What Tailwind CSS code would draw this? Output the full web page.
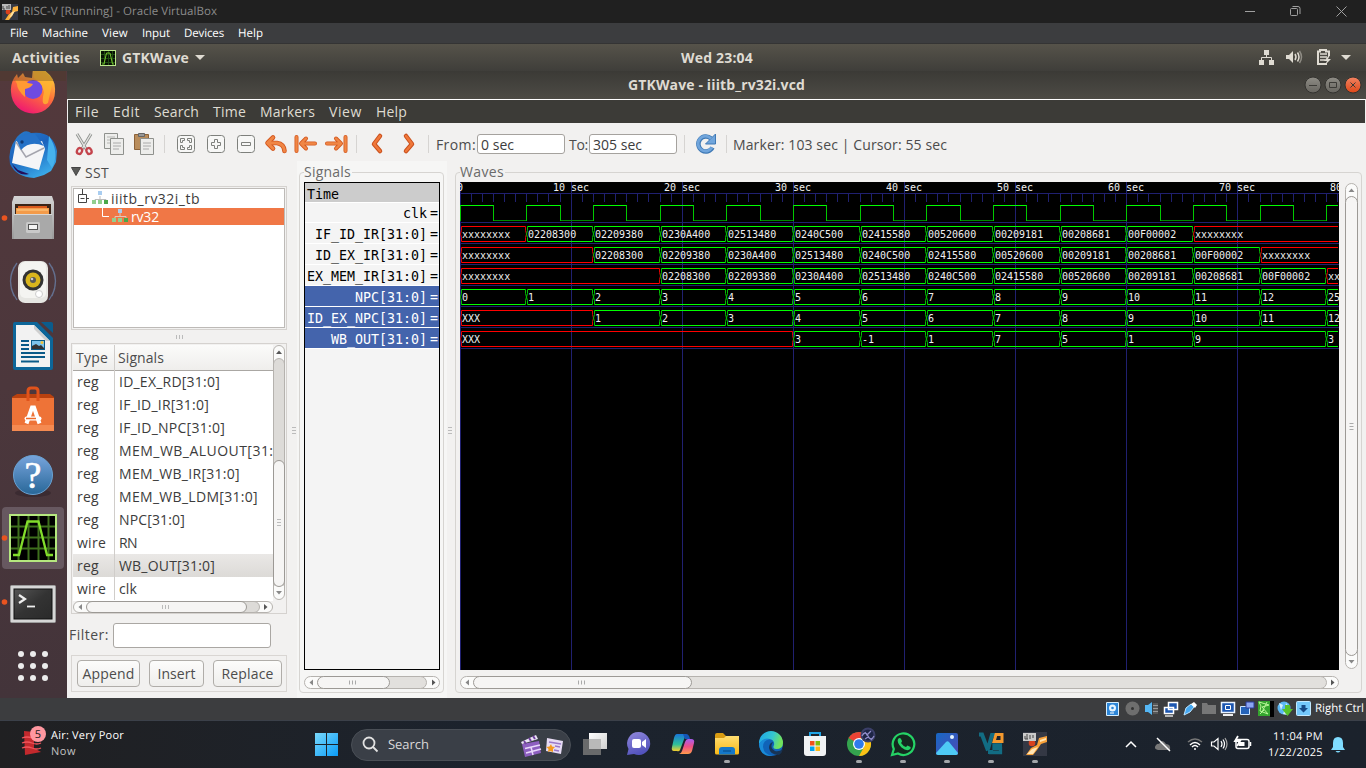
<!DOCTYPE html>
<html lang="en">
<head>
<meta charset="utf-8">
<title>GTKWave - iiitb_rv32i.vcd</title>
<script src="https://cdn.jsdelivr.net/npm/@tailwindcss/browser@4"></script>
</head>
<body class="w-[1366px] h-[768px] overflow-hidden bg-[#202020] font-['Open_Sans','Noto_Sans',sans-serif]">
<div class="flex flex-col w-[1366px] h-[768px] whitespace-nowrap">

<!-- Host window title -->
<header class="h-[23px] flex items-center bg-[#202020] text-[#8b8b8b] text-[11.500px] [text-rendering:geometricPrecision]">
  <svg class="ml-[2px] mb-[1px]" width="17" height="17" viewBox="0 0 17 17"><rect width="16" height="16" y="1" fill="#343844"/><path d="M3 17 7 11 10 9 11 4 16 3V8L12 9 10 13 7 17Z" fill="#fbb03b"/><path d="M10 9 13 8 10 13 7 15Z" fill="#ffe0a0"/><circle cx="6" cy="9" r="2.4" fill="#d9401c"/><rect width="9" height="6" y="1" fill="#b9b9b9"/><path d="M1 3v3h2M5 3v3M7 2v4" stroke="#444" fill="none"/></svg>
  <span class="ml-[4px]" data-w="194">RISC-V [Running] - Oracle VirtualBox</span>
  <svg class="ml-auto" width="121" height="22" viewBox="0 0 121 22" fill="none" stroke="#a0a0a0"><path d="M0 10.500h10M91.500 5.500l10 10M101.500 5.500l-10 10"/><rect x="45.500" y="7.500" width="7" height="7" rx="1"/><path d="M47.500 5.500h5.500a2 2 0 0 1 2 2v5.500"/></svg>
</header>
<nav class="h-[21px] flex items-center gap-[14px] pl-[10px] pt-px bg-[#3c3d3f] border-b border-[#343434] text-white text-[11.500px] [text-rendering:geometricPrecision]">
  <span data-w="18">File</span><span data-w="46">Machine</span><span data-w="26">View</span><span data-w="28">Input</span><span data-w="40">Devices</span><span data-w="25">Help</span>
</nav>

<!-- Guest top panel -->
<div class="h-[27px] flex items-center bg-gradient-to-b from-[#56534a] to-[#3f3e3a] text-[#dfdbd2] font-bold text-[14px]">
  <div class="flex items-center w-[628px] pl-[12px]">
    <span data-w="68">Activities</span>
    <svg class="ml-[20px]" width="16" height="16"><rect x=".5" y=".5" width="15" height="15" fill="#071004" stroke="#b9e68a"/><path d="M4.500 1v14M8.500 1v14M12.500 1v14M1 4.500h14M1 8.500h14M1 12.500h14" stroke="#1f4a12"/><path d="M2 14H4L6.500 3H10L12.500 14H14" fill="none" stroke="#73c62b"/></svg>
    <span class="ml-[6px]" data-w="67">GTKWave</span>
    <svg class="ml-[6px]" width="10" height="6"><path d="M0 0h10L5 5z" fill="#dfdbd2"/></svg>
  </div>
  <span class="ml-[53px] mb-[1px]" data-w="72">Wed 23:04</span>
  <svg class="ml-auto" width="108" height="27" viewBox="0 0 108 27" fill="#dfdbd2"><path d="M6 6h5v5H6zM1 16h5v5H1zM11 16h5v5h-5z"/><path d="M8.500 10v3.500M3.500 17v-3.500h10V17" fill="none" stroke="#dfdbd2"/><path d="M28 11h3l4-4v12l-4-4h-3z"/><path d="M37 10q2 3 0 6M39.500 8.500q3 4.500 0 9" fill="none" stroke="#dfdbd2" stroke-width="1.500"/><path d="M41.500 7q4 6 0 12" fill="none" stroke="#8f8c84" stroke-width="1.500"/><path d="M69 20H60V7.500h2V6h6v1.500h3V12" fill="none" stroke="#dfdbd2" stroke-width="2"/><path d="M62 10h7M62 13h7M62 16h5" stroke="#dfdbd2" stroke-width="1.500"/><path d="m71 11-5 6h3l-2 4 6-6h-3l2-4z"/><path d="M83 11h10l-5 5z"/></svg>
</div>

<div class="h-[627px] flex">
  <!-- Dock -->
  <aside class="w-[67px] h-[627px] overflow-hidden bg-gradient-to-b from-[#53393c] via-[#4c373c] to-[#43343a]">
    <div class="-mt-[13px] flex flex-col">
      <svg width="66" height="64" viewBox="0 0 66 64"><defs><linearGradient id="ff" x1=".8" y1="0" x2=".3" y2="1"><stop offset="0" stop-color="#ffe040"/><stop offset=".5" stop-color="#ff7139"/><stop offset="1" stop-color="#ee1474"/></linearGradient></defs><path d="M33 10 44 12Q56 20 55 33A22 22 0 0 1 11 34Q10 24 17 16L18 20 23 15 25 19 32 20Z" fill="url(#ff)"/><path d="M34 8 44 12 53 22 48 45Q40 50 44 34 42 25 34 20Z" fill="#ffb52e" opacity=".8"/><circle cx="33" cy="31.500" r="9.500" fill="#6f4be0"/><path d="M15 22Q23 20 28 25L33 26Q31 30 25 31L25 39Q17 32 17 26Z" fill="#ff9a33"/><rect y="13" width="66" height="10" fill="#4a3a20" opacity=".3"/></svg>
      <svg width="66" height="64" viewBox="0 0 66 64"><defs><linearGradient id="tb" x2=".6" y2="1"><stop stop-color="#2b7cc9"/><stop offset=".5" stop-color="#1b63bd"/><stop offset="1" stop-color="#3aa9e8"/></linearGradient></defs><path d="M17 15Q25 6 31 11 53 8 57 29L56 40 51 49 44 53 34 56Q16 55 10 42 7 28 17 15Z" fill="url(#tb)"/><path d="M49 14Q60 30 52 46L47 38Z" fill="#46b2ee"/><path d="M12 42 18 48 29 52Q18 55 12 42Z" fill="#25105a"/><path d="M16 19Q27 25 42 19L45 27 39 48 12 41Z" fill="#f5f5f7"/><path d="M16 20 26 35 44 26" fill="none" stroke="#a5a5ae" stroke-width="1.500"/><path d="M17 19Q23 10 35 12L44 24Q30 18 21 28Z" fill="#2572c8"/><circle cx="22" cy="20" r="1.700" fill="#123a74"/></svg>
      <svg width="66" height="64" viewBox="0 0 66 64"><defs><linearGradient id="fi" x2="0" y2="1"><stop stop-color="#d4d4d4"/><stop offset="1" stop-color="#9a9a9a"/></linearGradient></defs><circle cx="4.500" cy="32" r="2.800" fill="#e95420"/><path d="M14 10H52L54 16V53H12V16Z" fill="url(#fi)"/><rect x="15" y="18" width="36" height="11" fill="#3a2418"/><path d="M16 22h33v6H16z" fill="#f39b4a"/><path d="M18 20h29v2H18z" fill="#d95a1d"/><path d="M17 24h31" stroke="#ffd08a"/><rect x="14" y="28" width="38" height="25" fill="#a9a9a9"/><path d="M14 28.500h38" stroke="#d8d8d8"/><rect x="26" y="36" width="14" height="11" rx="1.500" fill="#c9c9c9"/><rect x="28.500" y="38.500" width="9" height="5" fill="#f4f4f4" stroke="#555"/></svg>
      <svg width="66" height="64" viewBox="0 0 66 64"><path d="M17 13Q4 31 17 50M14 17Q7 31 14 46M49 13Q62 31 49 50M52 17Q59 31 52 46" stroke="#64708f" stroke-width="1.300" fill="none"/><rect x="18" y="11" width="30" height="42" rx="7" fill="#e6e6e2"/><rect x="20" y="12" width="26" height="36" rx="5" fill="#f4f4f1"/><circle cx="33" cy="30" r="10.500" fill="#333"/><circle cx="33" cy="30" r="7.500" fill="#d9b51d"/><circle cx="33" cy="30" r="3" fill="#575757"/><circle cx="32" cy="29" r="1.300" fill="#ccc"/><circle cx="39" cy="44" r="3.500" fill="#fff" stroke="#ccc"/></svg>
      <svg width="66" height="64" viewBox="0 0 66 64"><path d="M15 8H37L53 24V54a2 2 0 0 1-2 2H15a2 2 0 0 1-2-2V10a2 2 0 0 1 2-2Z" fill="#0d6699"/><path d="M41 8H51a2 2 0 0 1 2 2v9Z" fill="#0b5c8c"/><path d="M16 11H34L50 27V53H16Z" fill="#f2f2f2"/><path d="M34 11V15L46 27H50Z" fill="#cfcfcf"/><path d="M21 27h8M21 31h8M21 35h8M21 39h24M21 43h24M21 47.500h18" stroke="#0a5a88" stroke-width="2"/><rect x="31.500" y="26.500" width="13" height="9" fill="#7cc4ec" stroke="#0a5a88"/><path d="M32 35V32l4-2 3 2 2-1 3 3v1z" fill="#333"/><circle cx="42" cy="28.500" r="1.500" fill="#f3c33b"/></svg>
      <svg width="66" height="64" viewBox="0 0 66 64"><path d="M12 19 17 16H50L54 19V24H12Z" fill="#b9410f"/><rect x="12" y="20" width="42" height="33" fill="#ee7337"/><path d="M12 47h42v6H12z" fill="#f58a51"/><path d="M28 23V13Q28 10 31 10H35Q38 10 38 13V23" fill="none" stroke="#e0531b" stroke-width="3"/><path d="M26.500 45.500 32 29.500h2L39.500 45.500" fill="none" stroke="#fff" stroke-width="4"/><rect x="24.500" y="38.500" width="17" height="4" rx="2" fill="#fff"/><path d="M26 40.500h10" stroke="#ee6a2a" stroke-width="1.500"/></svg>
      <svg width="66" height="64" viewBox="0 0 66 64"><defs><linearGradient id="hp" x2="0" y2="1"><stop stop-color="#77a4dc"/><stop offset="1" stop-color="#286798"/></linearGradient></defs><ellipse cx="33" cy="51" rx="18" ry="4" fill="#2d2027" opacity=".5"/><circle cx="33" cy="33" r="19.500" fill="url(#hp)" stroke="#6aa2d2"/><text x="33" y="46" text-anchor="middle" font-family="Liberation Serif" font-size="38" fill="#fff" stroke="#fff" stroke-width=".6">?</text></svg>
      <svg width="66" height="64" viewBox="0 0 66 64"><rect x="2" y="1" width="62" height="62" rx="4" fill="#675860"/><circle cx="4.500" cy="32" r="2.800" fill="#e95420"/><rect x="10" y="9" width="46" height="46" fill="#000" stroke="#b5e77f" stroke-width="2"/><path d="M18.500 10v44M28.500 10v44M38.500 10v44M48.500 10v44M11 20.500h44M11 31.500h44M11 42.500h44" stroke="#3e6f1d" stroke-width="2"/><path d="M13 49H19L27.500 15.500H38.500L47 49H53" fill="none" stroke="#82dc2b" stroke-width="2.300"/></svg>
      <svg width="66" height="64" viewBox="0 0 66 64"><defs><linearGradient id="tm" x2="1" y2="1"><stop stop-color="#555"/><stop offset=".5" stop-color="#333"/><stop offset="1" stop-color="#2a2a2a"/></linearGradient></defs><circle cx="4.500" cy="32" r="2.800" fill="#e95420"/><rect x="10.500" y="15.500" width="45" height="37" rx="1" fill="#d6d6d6" stroke="#9c9c9c"/><rect x="14" y="19" width="38" height="30" fill="url(#tm)" stroke="#111"/><path d="m19 25 6 4-6 4" fill="none" stroke="#eee" stroke-width="2.200"/><path d="M27 36.500h8" stroke="#eee" stroke-width="1.800"/></svg>
      <svg width="66" height="64" viewBox="0 0 66 64" fill="#ececec"><circle cx="21" cy="20" r="3"/><circle cx="33" cy="20" r="3"/><circle cx="45" cy="20" r="3"/><circle cx="21" cy="32" r="3"/><circle cx="33" cy="32" r="3"/><circle cx="45" cy="32" r="3"/><circle cx="21" cy="44" r="3"/><circle cx="33" cy="44" r="3"/><circle cx="45" cy="44" r="3"/></svg>
    </div>
  </aside>

  <main class="w-[1299px] flex flex-col bg-[#f2f1f0] text-[#4c4c4c] text-[14px]">
    <div class="h-[28px] flex items-center bg-gradient-to-b from-[#3b3a36] to-[#4d4b45] text-[#dfdbd2] font-bold">
      <span class="ml-[561px] mb-[2px]" data-w="177">GTKWave - iiitb_rv32i.vcd</span>
      <svg class="ml-auto" width="62" height="28" viewBox="-6 0 62 28"><defs><linearGradient id="gb" x2="0" y2="1"><stop stop-color="#8f8d86"/><stop offset="1" stop-color="#66645e"/></linearGradient><linearGradient id="ob" x2="0" y2="1"><stop stop-color="#f28362"/><stop offset="1" stop-color="#df4717"/></linearGradient></defs><circle cx="3" cy="14" r="8" fill="url(#gb)" stroke="#33322f"/><circle cx="23" cy="14" r="8" fill="url(#gb)" stroke="#33322f"/><circle cx="43" cy="14" r="8" fill="url(#ob)" stroke="#33322f"/><path d="M-1 14.500H7M19.500 11.500h7v5h-7zM40.500 11.500l5 5M45.500 11.500l-5 5" fill="none" stroke="#3c3b37"/></svg>
    </div>
    <nav class="h-[24px] ml-px mr-px flex items-center gap-[14px] pl-[7px] bg-[#3c3b37] border-t border-white text-[#dfdbd2] text-[14px]">
      <span data-w="24">File</span><span data-w="27">Edit</span><span data-w="45">Search</span><span data-w="33">Time</span><span data-w="55">Markers</span><span data-w="33">View</span><span data-w="31">Help</span>
    </nav>

    <!-- Toolbar -->
    <div class="h-[42px] pl-[2px] flex items-center">
      <svg width="30" height="30" viewBox="0 0 30 30"><path d="M8 5 17 20M22 5 13 20" stroke="#8c8f8c" stroke-width="3"/><path d="M8 5 17 20M22 5 13 20" stroke="#e3e3e1" stroke-width="1.400"/><ellipse cx="10.500" cy="22" rx="2.500" ry="3" fill="none" stroke="#c4444c" stroke-width="2.300" transform="rotate(25 10.500 22)"/><ellipse cx="20" cy="22" rx="2.500" ry="3" fill="none" stroke="#c4444c" stroke-width="2.300" transform="rotate(-25 20 22)"/></svg>
      <svg width="30" height="30" viewBox="0 0 30 30" fill="#ededeb" stroke="#8f918d"><path d="M5.500 4.500h13v15h-13z"/><path d="M8 8h8M8 11h8M8 14h8" stroke="#b5b5b2"/><path d="M11.500 9.500h13v16h-13z"/><path d="M14 14h8M14 17h8M14 20h6" stroke="#aaa"/></svg>
      <svg width="30" height="30" viewBox="0 0 30 30" stroke="#8f918d"><path d="M5.500 5.500h14v15h-14z" fill="#b98d5c" stroke="#8c6239"/><path d="M9.500 4.500h6v3h-6z" fill="#999" stroke="#666"/><path d="M11.500 9.500h13v16h-13z" fill="#ededeb"/><path d="M14 14h8M14 17h8M14 20h6" stroke="#aaa"/></svg>
      <i class="w-px h-[18px] bg-[#d6d4d2] ml-[5px] mr-[6px]"></i>
      <svg width="30" height="30" viewBox="0 0 30 30" fill="none" stroke="#7e807c"><rect x="6.500" y="6.500" width="17" height="17" rx="3" fill="#f7f7f6"/><path d="M9.500 13.500v-4h4v2h-2v2zM20.500 13.500v-4h-4v2h2v2zM9.500 16.500v4h4v-2h-2v-2zM20.500 16.500v4h-4v-2h2v-2z"/></svg>
      <svg width="30" height="30" viewBox="0 0 30 30" fill="none" stroke="#7e807c"><rect x="6.500" y="6.500" width="17" height="17" rx="3" fill="#f7f7f6"/><path d="M13.500 10.500h3v3h3v3h-3v3h-3v-3h-3v-3h3z"/></svg>
      <svg width="30" height="30" viewBox="0 0 30 30" fill="none" stroke="#7e807c"><rect x="6.500" y="6.500" width="17" height="17" rx="3" fill="#f7f7f6"/><path d="M10.500 13.500h9v3h-9z"/></svg>
      <svg width="30" height="30" viewBox="0 0 30 30" fill="none" stroke-linecap="round" stroke-linejoin="round"><path d="M12 8.500 6.500 14 12 19.500M7 14H16Q23 15 23.500 22" stroke="#d4581f" stroke-width="4.600"/><path d="M12 8.500 6.500 14 12 19.500M7 14H16Q23 15 23.500 22" stroke="#f08645" stroke-width="2.800"/></svg>
      <svg width="30" height="30" viewBox="0 0 30 30" fill="none" stroke-linecap="round" stroke-linejoin="round"><path d="M5.500 8v14M15 9.500l-5 5 5 5M10.500 14.500H24" stroke="#d4581f" stroke-width="4"/><path d="M5.500 8v14M15 9.500l-5 5 5 5M10.500 14.500H24" stroke="#f08645" stroke-width="2.400"/></svg>
      <svg width="30" height="30" viewBox="0 0 30 30" fill="none" stroke-linecap="round" stroke-linejoin="round"><path d="M24.500 8v14M15 9.500l5 5-5 5M19.500 14.500H6" stroke="#d4581f" stroke-width="4"/><path d="M24.500 8v14M15 9.500l5 5-5 5M19.500 14.500H6" stroke="#f08645" stroke-width="2.400"/></svg>
      <i class="w-px h-[18px] ml-[5px] mr-[5px] bg-[#d6d4d2]"></i>
      <svg width="30" height="30" viewBox="0 0 30 30" fill="none" stroke-linecap="round" stroke-linejoin="round"><path d="m18 7-6 8 6 7" stroke="#c9501d" stroke-width="4.500"/><path d="m18 7-6 8 6 7" stroke="#f0783a" stroke-width="2.500"/></svg>
      <svg class="ml-[2px]" width="30" height="30" viewBox="0 0 30 30" fill="none" stroke-linecap="round" stroke-linejoin="round"><path d="m12 7 6 8-6 7" stroke="#c9501d" stroke-width="4.500"/><path d="m12 7 6 8-6 7" stroke="#f0783a" stroke-width="2.500"/></svg>
      <i class="w-px h-[18px] ml-[4px] mr-[7px] bg-[#d6d4d2]"></i>
      <span class="w-[41px]"><span data-w="40">From:</span></span>
      <div class="w-[88px] h-[20px] border border-[#a5a29e] rounded-[3px] bg-white text-[#3c3c3c] flex items-center pl-[3px]"><span data-w="33">0 sec</span></div>
      <span class="w-[20px] ml-[4px]"><span data-w="19">To:</span></span>
      <div class="w-[88px] h-[20px] border border-[#a5a29e] rounded-[3px] bg-white text-[#3c3c3c] flex items-center pl-[3px]"><span data-w="49">305 sec</span></div>
      <i class="w-px h-[18px] ml-[7px] mr-[6px] bg-[#d6d4d2]"></i>
      <svg width="30" height="30" viewBox="0 0 30 30" fill="none"><path d="M21.500 18.500A7.500 7.500 0 1 1 20 9.500" stroke="#3f79b5" stroke-width="4.500"/><path d="M24.500 5v10h-10z" fill="#70a5dc" stroke="#3f79b5"/><path d="M21 18.500A7.500 7.500 0 1 1 20 9.500" stroke="#70a5dc" stroke-width="2.800"/></svg>
      <i class="w-px h-[18px] ml-[5px] mr-[6px] bg-[#d6d4d2]"></i>
      <span data-w="214">Marker: 103 sec | Cursor: 55 sec</span>
    </div>

    <div class="h-[533px] flex">
      <!-- Tree and signal list -->
      <section class="w-[224px] flex flex-col">
        <div class="h-[21px] flex items-center pl-[4px] pb-[9px]"><svg width="11" height="14" viewBox="0 0 11 14"><path d="M.5 3.500h9L5 11.500z" fill="#5a5a58" stroke="#444"/></svg><span class="ml-[3px] mt-[3px]" data-w="24">SST</span></div>
        <div class="w-[216px] h-[144px] ml-[4px] border border-[#d5d2cf] p-px">
          <div class="w-[212px] h-[140px] border border-[#bdbab7] bg-white text-[#3c3c3c]">
            <div class="h-[19px] flex items-center"><svg width="36" height="19" viewBox="0 0 36 19"><path d="M8.500 0v5M13 9.500h2" stroke="#444"/><path d="M4.500 5.500h8v8h-8zM6.500 9.500h4" fill="none" stroke="#444"/><path d="M26 7v4M21 13v-2.500h11V13" fill="none" stroke="#bbb"/><path d="M24 2h4v4h-4z" fill="#a9cdf0"/><path d="M18 11h4v4h-4zM24 11h4v4h-4z" fill="#93cf8e"/><path d="M30 11h4v4h-4z" fill="#4aa84a"/></svg><span class="ml-[1px]" data-w="89">iiitb_rv32i_tb</span></div>
            <div class="h-[17px] flex items-center bg-[#f07746] text-white"><svg width="56" height="17" viewBox="0 0 56 17"><path d="M28.500 0v8.500H35" fill="none" stroke="#fff"/><path d="M46 5v4M41 11V8.500h11V11" fill="none" stroke="#e4c7b9"/><path d="M44 1h4v4h-4z" fill="#a9cdf0"/><path d="M38 10h4v4h-4zM44 10h4v4h-4z" fill="#93cf8e"/><path d="M50 10h4v4h-4z" fill="#4aa84a"/></svg><span class="ml-[1px]" data-w="28">rv32</span></div>
          </div>
        </div>
        <div class="h-[13px] w-[224px] flex justify-center items-center gap-[2px]"><i class="w-px h-[4px] bg-[#bbb]"></i><i class="w-px h-[4px] bg-[#bbb]"></i><i class="w-px h-[4px] bg-[#bbb]"></i></div>
        <div class="w-[216px] h-[271px] ml-[4px] border border-[#d5d2cf] p-px">
          <div class="flex h-[256px]">
            <div class="w-[200px] overflow-hidden bg-white text-[#3c3c3c]">
              <div class="h-[26px] flex items-center bg-gradient-to-b from-[#fbfbfa] to-[#efeeec] border-b border-[#aaa7a3] text-[#4c4c4c]"><span class="w-[42px] h-[25px] pl-[3px] pt-[2px] border-r border-[#d0cdca]"><span data-w="32">Type</span></span><span class="pl-[3px]"><span data-w="46">Signals</span></span></div>
              <div id="rows" class="-mt-px"></div>
            </div>
            <svg width="12" height="256" viewBox="0 0 12 256"><rect x=".5" y=".5" width="11" height="254" rx="5.500" fill="#fbfbfa" stroke="#b5b2ae"/><path d="M.5 19Q1 14 6 13.500 11 14 11.500 19V240H.5z" fill="#dddbd8" stroke="#b5b2ae"/><rect x=".5" y="115.500" width="11" height="126" rx="5.500" fill="#f6f5f4" stroke="#9c9995"/><path d="m3 9 3-3.500L9 9z" fill="#555"/><path d="m3 246 3 3.500 3-3.500z" fill="#888"/><path d="M4 174.500h4M4 177.500h4M4 180.500h4" stroke="#bbb"/></svg>
          </div>
          <svg width="200" height="13" viewBox="0 0 200 13"><rect x=".5" y=".5" width="199" height="11" rx="5.500" fill="#fbfbfa" stroke="#b5b2ae"/><rect x="100" y=".5" width="86.500" height="11" rx="5.500" fill="#dddbd8" stroke="#b5b2ae"/><rect x="13.500" y=".5" width="160" height="11" rx="5.500" fill="#f6f5f4" stroke="#9c9995"/><path d="m9 3-3.500 3L9 9z" fill="#888"/><path d="m191 3 3.500 3-3.500 3z" fill="#555"/><path d="M89.500 4v4M92.500 4v4M95.500 4v4" stroke="#bbb"/></svg>
        </div>
        <div class="h-[41px] flex items-center pl-[2px] pt-[1px]"><span class="w-[44px] mb-[2px]"><span data-w="40">Filter:</span></span><div class="w-[158px] h-[25px] border border-[#aaa7a3] rounded-[3px] bg-white"></div></div>
        <div class="w-[216px] h-[37px] ml-[4px] border border-[#d9d6d3] flex items-center pl-[5px]">
          <div class="w-[63px] h-[27px] rounded-[4px] border border-[#b0ada9] bg-gradient-to-b from-[#fcfcfb] to-[#efeeec] flex items-center justify-center"><span data-w="52">Append</span></div>
          <div class="w-[55px] h-[27px] ml-[9px] rounded-[4px] border border-[#b0ada9] bg-gradient-to-b from-[#fcfcfb] to-[#efeeec] flex items-center justify-center"><span data-w="38">Insert</span></div>
          <div class="w-[69px] h-[27px] ml-[9px] rounded-[4px] border border-[#b0ada9] bg-gradient-to-b from-[#fcfcfb] to-[#efeeec] flex items-center justify-center"><span data-w="52">Replace</span></div>
        </div>
      </section>
      <svg width="6" height="533" viewBox="0 0 6 533"><path d="M1 262.500h4M1 265.500h4M1 268.500h4" stroke="#bbb"/></svg>

      <!-- Signal names -->
      <section class="w-[150px] -mt-[4px] pt-[4px] h-[537px] bg-[#f6f6f5]">
        <div class="relative h-[521px] w-[145px] ml-[2px] mt-[7px] border border-[#d6d4d1] rounded-[4px] pl-[4px] pt-[9px]">
          <span class="absolute left-[4px] -top-[11px] bg-[#f6f6f5] text-[#6a6a6a] leading-[20px] pr-px"><span data-w="47">Signals</span></span>
          <div id="names" class="w-[136px] h-[488px] border border-black bg-[#f4f4f4] font-['DejaVu_Sans_Mono',monospace] text-[13.300px] text-black"></div>
          <svg class="mt-[6px]" width="136" height="13" viewBox="0 0 136 13"><rect x=".5" y=".5" width="135" height="12" rx="6" fill="#fbfbfa" stroke="#b5b2ae"/><rect x="50" y=".5" width="72.500" height="12" rx="6" fill="#e2e0dd" stroke="#b5b2ae"/><rect x="13.500" y=".5" width="72" height="12" rx="6" fill="#f6f5f4" stroke="#9c9995"/><path d="M9 3.500 5.500 6.500 9 9.500z" fill="#888"/><path d="m128 3.500 3.500 3-3.500 3z" fill="#555"/><path d="M45.500 4.500v4M48.500 4.500v4M51.500 4.500v4" stroke="#aaa"/></svg>
        </div>
      </section>

      <!-- Waves -->
      <section class="w-[919px] flex">
        <svg class="shrink-0" width="8" height="533" viewBox="0 0 8 533"><path d="M1 262.500h4M1 265.500h4M1 268.500h4" stroke="#bbb"/></svg>
        <div class="relative h-[521px] w-[907px] mt-[7px] border border-[#d6d4d1] rounded-[4px] pl-[4px] pt-[9px]">
          <span class="absolute left-[4px] -top-[11px] bg-[#f2f1f0] text-[#6a6a6a] leading-[20px] pr-px"><span data-w="44">Waves</span></span>
          <div class="flex gap-[6px]">
            <svg id="waves" class="bg-black" width="879" height="488" viewBox="460 182 879 488" font-family="DejaVu Sans Mono, monospace" font-size="10" fill="#f0f0f0"></svg>
            <svg width="13" height="488" viewBox="0 0 13 488"><rect x=".5" y="1.500" width="12" height="485" rx="6" fill="#fbfbfa" stroke="#b5b2ae"/><rect x=".5" y="14.500" width="12" height="459" rx="6" fill="#f6f5f4" stroke="#9c9995"/><path d="m3.500 10 3-3.500 3 3.500zM3.500 478l3 3.500 3-3.500z" fill="#888"/><path d="M4.500 241.500h4M4.500 244.500h4M4.500 247.500h4" stroke="#aaa"/></svg>
          </div>
          <svg class="mt-[6px]" width="879" height="13" viewBox="0 0 879 13"><rect x=".5" y=".5" width="878" height="12" rx="6" fill="#fbfbfa" stroke="#b5b2ae"/><rect x="200" y=".5" width="666.500" height="12" rx="6" fill="#e2e0dd" stroke="#b5b2ae"/><rect x="13.500" y=".5" width="218" height="12" rx="6" fill="#f6f5f4" stroke="#9c9995"/><path d="M9 3.500 5.500 6.500 9 9.500z" fill="#888"/><path d="m871 3.500 3.500 3-3.500 3z" fill="#555"/><path d="M118.500 4.500v4M121.500 4.500v4M124.500 4.500v4" stroke="#aaa"/></svg>
        </div>
      </section>
    </div>
  </main>
</div>

<!-- Host status bar -->
<div class="h-[22px] flex items-center bg-[#3c3d3f] text-white text-[11.500px] [text-rendering:geometricPrecision]">
  <svg class="ml-[1103px] shrink-0" width="212" height="22" viewBox="1103 698 212 22"><rect x="1106" y="702" width="13" height="14" rx="1" fill="#d6efff"/><rect x="1107" y="703" width="11" height="12" fill="#2d86d8"/><circle cx="1112.500" cy="708" r="3.500" fill="#e6f5ff"/><circle cx="1112.500" cy="708" r="1.300" fill="#2d86d8"/><path d="M1110 713h4" stroke="#fff"/><circle cx="1132.500" cy="708.500" r="7" fill="#6e6e6e"/><circle cx="1132.500" cy="708.500" r="1.500" fill="#333"/><path d="M1145 705h3l4-3v13l-4-3h-3z" fill="#55b6f3"/><path d="M1153 703h5v11h-5z" fill="#575757"/><path d="M1153 705.500h5M1153 708.500h5M1153 711.500h5" stroke="#999"/><path d="M1168.500 702.500h9v7h-9zM1164.500 707.500h9v6h-9z" fill="#1c56b0" stroke="#fff" stroke-width="1.500"/><path d="M1165 716h8" stroke="#ddd" stroke-width="1.500"/><path d="m1184 715 2-7 5-4 3 3-4 5z" fill="#45a8f2" stroke="#bce4ff"/><path d="m1191 704 3-2 3 3-2 3z" fill="#fff"/><path d="M1202 703h5l1 2h8v9h-14z" fill="#777"/><path d="M1221.500 702.500h13v10h-13z" fill="#1c56b0" stroke="#eaf4ff" stroke-width="1.500"/><path d="M1225.500 705.500h5v4h-5z" fill="none" stroke="#fff"/><path d="M1223 715h10" stroke="#eee" stroke-width="2"/><path d="M1240.500 706.500h9v8h-9z" fill="#2563b8" stroke="#cce5ff"/><path d="M1246 702h8v6h-8z" fill="#8aa4f2" stroke="#2b3d9a"/><path d="M1270 701h4v16h-4z" fill="#000"/><path d="M1258 701h12v15h-12z" fill="#35a52e"/><path d="m1259 702 10 3-7 2 6 7-8-3 1-5zM1260 714l4-4M1267 702l-5 10" fill="none" stroke="#b9f598"/><circle cx="1284" cy="708" r="6.500" fill="#5cb8f4"/><path d="m1279 703 4 2-2 5zM1286 703l3 4v4l-2 4-4-1 2-5z" fill="#d2f0ff"/><path d="M1285 705h5v4h3l-5.500 7-5.500-7h3z" fill="#58c22c"/><rect x="1296.500" y="701.500" width="14" height="14" rx="1" fill="#74c8fa" stroke="#c2e9ff"/><path d="M1301.500 705h4v3h2.500l-4.500 4.500-4.500-4.500h2.500z" fill="#174a86"/></svg>
  <span data-w="49">Right Ctrl</span>
</div>

<!-- Host taskbar -->
<footer class="h-[48px] flex items-center border-t border-[#3b4049] bg-gradient-to-r from-[#202022] via-[#1c232d] via-35% to-[#1b222c] text-white text-[11px] [text-rendering:geometricPrecision]">
  <svg class="ml-[20px]" width="28" height="47" viewBox="20 721 28 47"><path d="M24 731 34 732V748L41 752 25 755z" fill="#c3292d"/><path d="M22 738q5-2 10 0t8 0M22 743q5-2 10 0t9 0M22 748q5-2 10 0t9 0" fill="none" stroke="#f0545b" stroke-width="1.300"/><circle cx="38" cy="734" r="8" fill="#ff97a0"/><text x="38" y="738" text-anchor="middle" font-size="11" fill="#1b1b1b" font-family="Open Sans, sans-serif">5</text></svg>
  <div class="ml-[3px] w-[264px] flex flex-col leading-[16px] pb-[1px]"><span><span data-w="73">Air: Very Poor</span></span><span class="text-[#c2c2c2]"><span data-w="25">Now</span></span></div>
  <svg width="23" height="23" viewBox="0 0 23 23"><defs><linearGradient id="wn" x2="1" y2="1"><stop stop-color="#79d8fb"/><stop offset="1" stop-color="#0a9cf8"/></linearGradient></defs><path d="M0 0h11v11H0zM12 0h11v11H12zM0 12h11v11H0zM12 12h11v11H12z" fill="url(#wn)"/></svg>
  <div class="ml-[13px] w-[220px] h-[32px] rounded-full bg-[#3a3f47] border border-[#4a4f56] flex items-center text-[#d8d8d8] text-[13px]">
    <svg class="ml-[10px]" width="17" height="17" fill="none" stroke="#e2e2e2" stroke-width="1.800"><circle cx="7" cy="7" r="5.500"/><path d="m11 11 4.500 4.500"/></svg>
    <span class="ml-[9px]" data-w="41">Search</span>
    <svg class="ml-auto mr-[7px]" width="44" height="26" viewBox="0 0 44 26"><path d="m3 12 17-3 2 12-16 4z" fill="#8d5fc0"/><path d="m2 10 15-7 2 4-16 5z" fill="#ece4f7"/><path d="m5 9 2 3M10 6l2 3M14 4l2 3" stroke="#71409f" stroke-width="2"/><path d="M6 16.500 21 13M7 21l15-4M12 15l2 8" stroke="#e9d9fb" stroke-width="1.500"/><path d="m28 6 16 3-2 13-15-3z" fill="#e7dcf4"/><path d="m30 10 12 2M36 14l5 1M35 18l5 1" stroke="#9a78c9" stroke-width="1.500"/><path d="m32 12 1 2.500 3 .5-2 2 0 3-3-1-2 1 .500-3-2-2 3-.5z" fill="#f49a1d"/></svg>
  </div>
  <div class="ml-[2px] flex">
    <svg width="44" height="47" viewBox="0 0 44 47"><defs><linearGradient id="tv" x2="1" y2="1"><stop stop-color="#fff"/><stop offset="1" stop-color="#cfcfcf"/></linearGradient></defs><path d="M16 12h18v16H16z" fill="url(#tv)"/><path d="M10 18h18v16H10z" fill="#777" opacity=".85"/><path d="M16 18h12v10H16z" fill="#b9b9b9"/></svg>
    <svg width="44" height="47" viewBox="0 0 44 47"><defs><linearGradient id="ct" x2=".4" y2="1"><stop stop-color="#9289dc"/><stop offset="1" stop-color="#5353bd"/></linearGradient></defs><path d="M22 11a11.500 11.500 0 1 1-5 22l-7 1 1.500-6A11.500 11.500 0 0 1 22 11z" fill="url(#ct)"/><rect x="15" y="18" width="9" height="9" rx="2" fill="#fff"/><path d="m25 21 4-3v9l-4-3z" fill="#fff"/></svg>
    <svg width="44" height="47" viewBox="0 0 44 47"><defs><linearGradient id="cp" x2="0" y2="1"><stop stop-color="#1975d8"/><stop offset=".6" stop-color="#2fbf9a"/><stop offset="1" stop-color="#ffd028"/></linearGradient><linearGradient id="cq" x2="0" y2="1"><stop stop-color="#a65df0"/><stop offset=".5" stop-color="#ef4f86"/><stop offset="1" stop-color="#ff9b4c"/></linearGradient></defs><path d="M16 13h9l-6 16q-1 2-3 1h-3q-3 0-2-4l2-9q1-4 3-4z" fill="url(#cp)"/><path d="M22 13h3q3 0 4 5h-5z" fill="#1456b8"/><path d="M27 18h3q4 0 3 4l-2 8q-1 3-4 3h-9q2 0 3-3l3-9q1-3 3-3z" fill="url(#cq)"/></svg>
    <svg width="44" height="47" viewBox="0 0 44 47"><defs><linearGradient id="fx" x2="0" y2="1"><stop stop-color="#ffde72"/><stop offset="1" stop-color="#f9b916"/></linearGradient></defs><path d="M10 14q0-2 2-2h6l3 3h11v6H10z" fill="#d99c12"/><path d="M10 17h9l2-2h13v17q0 1.500-1.500 1.500h-21Q10 33.500 10 32z" fill="url(#fx)"/><path d="M14 33.500V29q0-3 3-3h10q3 0 3 3v4.500z" fill="#1478c9"/><path d="M18 30h8" stroke="#0b5798" stroke-width="1.500"/><rect x="19" y="39" width="6" height="3" rx="1.500" fill="#a3a6aa"/></svg>
    <svg width="44" height="47" viewBox="0 0 44 47"><defs><linearGradient id="ed" x2="1" y2=".3"><stop stop-color="#1ca3e8"/><stop offset=".6" stop-color="#35c6d0"/><stop offset="1" stop-color="#72e35c"/></linearGradient></defs><circle cx="22" cy="23" r="12" fill="#1063b8"/><path d="M10 22A12 12 0 0 1 34 22Q34 28 27 28q-4 0-2-4 1-5-5-6-7 0-10 5z" fill="url(#ed)"/><path d="M21 18q-7 1-7 8 1 8 10 9-13 1-14-12 4-7 11-5z" fill="#198bd7"/><path d="M24 21q-4 6 2 9 4 1 8-2-1 4-4 6-9 0-10-7 0-5 4-6z" fill="#183455"/></svg>
    <svg width="44" height="47" viewBox="0 0 44 47"><path d="M17 17v-5h10v5" fill="none" stroke="#1fa4e6" stroke-width="2"/><path d="M11 15h22v17q0 3-3 3H14q-3 0-3-3z" fill="#f1f3f5"/><path d="M17 20h4.500v4.500H17z" fill="#f1511b"/><path d="M22.500 20H27v4.500h-4.500z" fill="#7ebc0c"/><path d="M17 25.500h4.500V30H17z" fill="#00a3ee"/><path d="M22.500 25.500H27V30h-4.500z" fill="#fcb813"/></svg>
    <svg width="44" height="47" viewBox="0 0 44 47"><circle cx="22" cy="23" r="12" fill="#34a44e"/><path d="M22 23 11.600 17a12 12 0 0 1 20.800 0z" fill="#ea4335"/><path d="M22 17h10.400A12 12 0 0 1 22 35l5-9z" fill="#fbc116"/><circle cx="22" cy="23" r="6" fill="#fff"/><circle cx="22" cy="23" r="4.800" fill="#2f7bea"/><circle cx="31" cy="14" r="7.500" fill="#3b3f68"/><circle cx="31" cy="14" r="5.500" fill="#1e2546"/><path d="M25 15q3-6 6 0t6 0M28 11l2 3 4-4M28 18l3-2 4 3" fill="none" stroke="#8f8cc8" stroke-width="1.300"/><rect x="19" y="39" width="6" height="3" rx="1.500" fill="#a3a6aa"/></svg>
    <svg width="44" height="47" viewBox="0 0 44 47"><path d="m11 34 1.800-6A10.800 10.800 0 1 1 17 32.500z" fill="#14291f" stroke="#25d366" stroke-width="2.200"/><path d="M17 18q2-2 3 0l1 2q0 1-1 2 2 3 5 4l1.500-1.500 3 1.500q1 1-1 2.500-3 2-8-2-5-5-3.500-8.500z" fill="#25d366"/><rect x="19" y="39" width="6" height="3" rx="1.500" fill="#a3a6aa"/></svg>
    <svg width="44" height="47" viewBox="0 0 44 47"><defs><linearGradient id="ph" x2="1" y2="1"><stop stop-color="#1768c4"/><stop offset="1" stop-color="#4c4ab5"/></linearGradient></defs><rect x="11" y="12" width="22" height="22" rx="2" fill="url(#ph)"/><path d="M11 32 21 21q1.500-1.500 3 0l9 11q0 2-2 2H13q-2 0-2-2z" fill="#4ecaf5"/><circle cx="27" cy="16" r="2" fill="#e7f6ff"/><rect x="19" y="39" width="6" height="3" rx="1.500" fill="#a3a6aa"/></svg>
    <svg width="44" height="47" viewBox="0 0 44 47" fill="none"><path d="M10 13.500h3l6 16M19 28l4-14h3M19 31h5" stroke="#126c83" stroke-width="4"/><path d="M33 24h-8v3.500h6.500v4H20" stroke="#126c83" stroke-width="3.300"/><path d="M33 13.500h-6l-2 7h8z" stroke="#f4992e" stroke-width="3"/><rect x="19" y="39" width="6" height="3" rx="1.500" fill="#a3a6aa"/></svg>
    <svg width="44" height="47" viewBox="0 0 44 47"><rect x="10" y="11" width="24" height="24" fill="#343844"/><path d="m13 34 5-7 6-3 2-7 8-2v6l-6 2-4 6-4 5z" fill="#f9a23a"/><path d="m14 33 5-5 6-2-5 7zM27 19l6-2v2l-6 2z" fill="#ffe5b5"/><circle cx="19" cy="22" r="3.300" fill="#d8431e"/><rect x="10" y="12" width="13" height="8" fill="#cacaca"/><path d="M12 15v3h3M14 13v5M17 14v4M20 14v3" stroke="#444" fill="none"/><rect x="19" y="39" width="6" height="3" rx="1.500" fill="#a3a6aa"/></svg>
  </div>
  <svg class="ml-auto" width="136" height="47" viewBox="1120 721 136 47" fill="none" stroke="#fff" stroke-width="1.500"><path d="m1126 747 5-5 5 5"/><path d="M1158 750q-5-1-2-5 2-2 3-1 3-6 7 0 5 0 4 6z" fill="#777" stroke="none"/><path d="m1157 738 13 13"/><g transform="translate(1195 744)"><path d="M-7-2Q0-8 7-2" stroke="#777"/><path d="M-5 1Q0-4 5 1M-3 3Q0 0 3 3"/><circle cy="5" r="1" fill="#fff" stroke="none"/></g><path d="M1211.500 742v4h2.500l4 3.500v-11l-4 3.500zM1221 741q2 3 0 6M1223 739.500q3 4.500 0 9" stroke-width="1.200"/><path d="M1225 738q4 6 0 12" stroke="#aaa" stroke-width="1.200"/><rect x="1236" y="739.500" width="13" height="9" rx="2"/><path d="M1238.500 742h6v4h-6z" fill="#fff" stroke="none"/><path d="M1250.500 742v4"/><path d="m1238 736-3 5h5l-3 5" stroke-width="1.800"/></svg>
  <div class="w-[67px] flex flex-col items-end leading-[16px]"><span data-w="50">11:04 PM</span><span data-w="55">1/22/2025</span></div>
  <svg class="ml-[7px] mr-[20px]" width="16" height="18" viewBox="0 0 16 18" fill="#7fdcff"><path d="M8 1q5 0 5 6v4l2 3H1l2-3V7q0-6 5-6zM5.500 15h5q-2.500 3-5 0z"/></svg>
</footer>
</div>

<script>
// Signal list
const rows = [['reg','ID_EX_RD[31:0]',101],['reg','IF_ID_IR[31:0]',90],['reg','IF_ID_NPC[31:0]',106],['reg','MEM_WB_ALUOUT[31:0]',168],['reg','MEM_WB_IR[31:0]',121],['reg','MEM_WB_LDM[31:0]',139],['reg','NPC[31:0]',66],['wire','RN',18],['reg','WB_OUT[31:0]',96],['wire','clk',18]];
document.getElementById('rows').innerHTML = rows.map(([t, n, w], i) =>
  `<div class="h-[23px] flex items-center ${i === 8 ? 'bg-gradient-to-b from-[#eae8e6] to-[#dcdad7]' : ''}"><span class="w-[42px] h-[23px] shrink-0 pl-[4px] pt-[1px] border-r border-[#d0cdca]"><span data-w="${t === 'reg' ? 22 : 29}">${t}</span></span><span class="pl-[4px]"><span data-w="${w}">${n}</span></span></div>`).join('');

// Displayed signal names
const names = ['clk','IF_ID_IR[31:0]','ID_EX_IR[31:0]','EX_MEM_IR[31:0]','NPC[31:0]','ID_EX_NPC[31:0]','WB_OUT[31:0]'];
document.getElementById('names').innerHTML =
  '<div class="h-[20px] bg-[#cccccc] border-b border-white pl-[2px] leading-[23px]">Time</div>' +
  names.map((n, i) => `<div class="${i ? 'h-[21px] leading-[23px]' : 'h-[20px] leading-[22px]'} border-b border-white flex justify-end overflow-hidden ${i > 3 ? 'bg-[#4464ac] text-white' : ''}"><span>${n}</span><span class="w-[12px] pl-[3px]">=</span></div>`).join('');

// Waveforms
const X0 = 460, END = 1338;
const edge = k => X0 + Math.floor(33.34 * k) + 0.5;
let s = '';
const line = (d, c) => { s += `<path d="${d}" fill="none" stroke="${c}"/>`; };
let grid = '';
for (let k = 0; k < 8; k++) grid += `M${X0 + 111 * k + 0.5} 182V670`;
grid += 'M460 193.5H1339';
for (let k = 0; k < 80; k++) grid += `M${X0 + Math.floor(11.112 * k) + 0.5} 194V202`;
for (let r = 0; r < 7; r++) grid += `M460 ${222.5 + 21 * r}H1339`;
line(grid, '#202070');
for (let k = 0; k <= 8; k++) {
  s += `<text x="${X0 + 111 * k - (k ? 18 : 3)}" y="191">${k ? k * 10 + ' sec' : '0'}</text>`;
}
let hi = '', lo = '', vt = '';
for (let k = 0; k < 27; k++) {
  const a = edge(k), b = Math.min(edge(k + 1), END);
  if (k % 2) lo += `M${a} 220.5H${b}`; else hi += `M${a} 205.5H${b}`;
  vt += `M${a} 205V221`;
}
line(lo, '#008c00'); line(vt, '#00c800'); line(hi, '#00ff00');
const ir = ['02208300','02209380','0230A400','02513480','0240C500','02415580','00520600','00209181','00208681','00F00002','xxxxxxxx'];
const list = [
  [[0,'xxxxxxxx'], ...ir.map((v, i) => [i + 1, v])],
  [[0,'xxxxxxxx'], ...ir.map((v, i) => [i + 2, v])],
  [[0,'xxxxxxxx'], ...ir.map((v, i) => [i + 3, v])],
  [...Array.from({ length: 13 }, (_, i) => [i, String(i)]), [13, '25']],
  [[0,'XXX'], ...Array.from({ length: 12 }, (_, i) => [i + 2, String(i + 1)])],
  [[0,'XXX'],[5,'3'],[6,'-1'],[7,'1'],[8,'7'],[9,'5'],[10,'1'],[11,'9'],[13,'3']]
];
list.forEach((segs, r) => {
  const t = 226.5 + 21 * r, m = t + 7.5, b = t + 15;
  segs.forEach(([k, v], i) => {
    const bad = /^x/i.test(v), c = bad ? '#ff0000' : '#00ff00', a = edge(2 * k);
    const last = i === segs.length - 1, e = last ? END : edge(2 * segs[i + 1][0]);
    const q = last ? e : e - 1;
    line(`M${a + 1} ${t}H${q}M${a + 1} ${b}H${q}`, c);
    line(`M${a + 1} ${t}V${t + 4}L${a} ${m}L${a + 1} ${b - 4}V${b}` + (last ? '' : `M${e - 1} ${t}V${t + 4}L${e} ${m}L${e - 1} ${b - 4}V${b}`), bad ? '#e00000' : '#00c000');
    s += `<text x="${a + 1.5}" y="${t + 11.5}">${k === 13 && v[0] === 'x' ? 'xx' : v}</text>`;
  });
});
document.getElementById('waves').innerHTML = s;

function fitLabels() {
  document.querySelectorAll('[data-w]').forEach(el => {
    el.style.letterSpacing = '0px';
    let sp = 0;
    for (let n = 0; n < 3; n++) {
      sp += (el.dataset.w - el.getBoundingClientRect().width) / el.textContent.length;
      el.style.letterSpacing = sp + 'px';
    }
  });
}
fitLabels();
window.addEventListener('load', () => {
  fitLabels();
  requestAnimationFrame(fitLabels);
  setTimeout(fitLabels, 60);
});
</script>
</body>
</html>
